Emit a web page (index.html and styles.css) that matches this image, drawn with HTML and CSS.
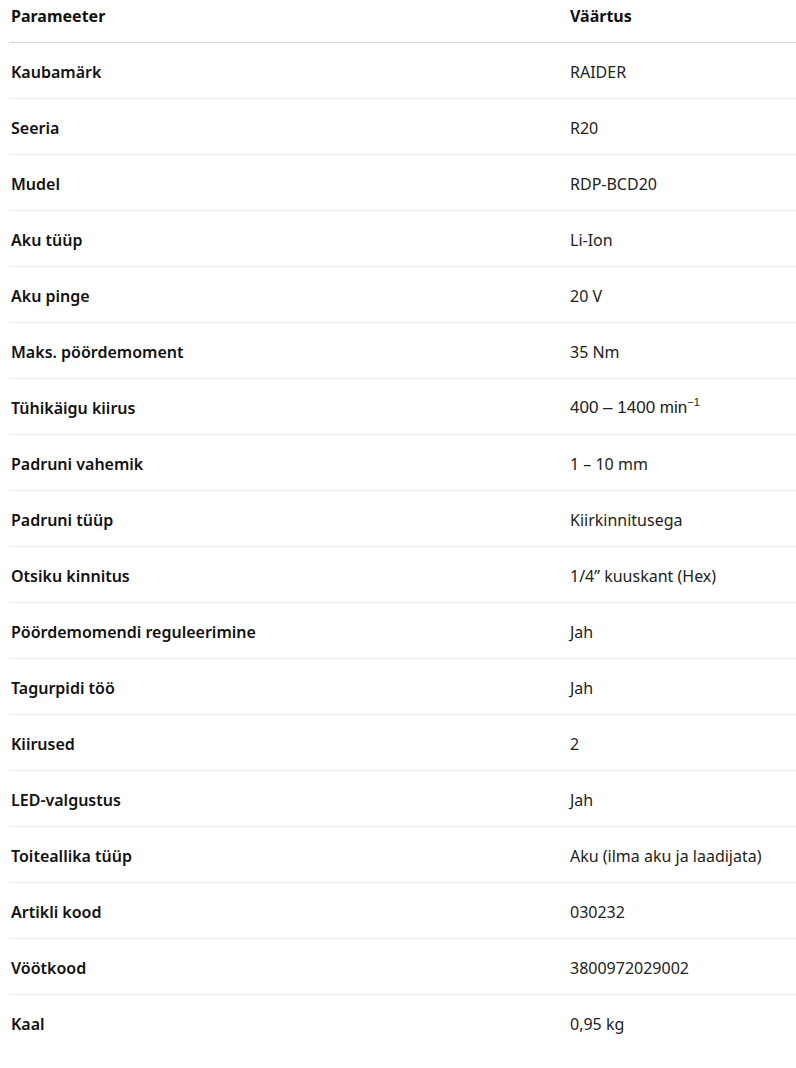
FILE: index.html
```html
<!DOCTYPE html>
<html lang="et">
<head>
<meta charset="utf-8">
<link rel="stylesheet" href="styles.css">
</head>
<body>
<table class="spec">
  <thead>
    <tr><th>Parameeter</th><th>Väärtus</th></tr>
  </thead>
  <tbody>
    <tr><td>Kaubamärk</td><td>RAIDER</td></tr>
    <tr><td>Seeria</td><td>R20</td></tr>
    <tr><td>Mudel</td><td>RDP-BCD20</td></tr>
    <tr><td>Aku tüüp</td><td>Li-Ion</td></tr>
    <tr><td>Aku pinge</td><td>20 V</td></tr>
    <tr><td>Maks. pöördemoment</td><td>35 Nm</td></tr>
    <tr><td>Tühikäigu kiirus</td><td class="arial">400 – 1400 min<sup>−1</sup></td></tr>
    <tr><td>Padruni vahemik</td><td>1 – 10 mm</td></tr>
    <tr><td>Padruni tüüp</td><td>Kiirkinnitusega</td></tr>
    <tr><td>Otsiku kinnitus</td><td>1/4” kuuskant (Hex)</td></tr>
    <tr><td>Pöördemomendi reguleerimine</td><td>Jah</td></tr>
    <tr><td>Tagurpidi töö</td><td>Jah</td></tr>
    <tr><td>Kiirused</td><td>2</td></tr>
    <tr><td>LED-valgustus</td><td>Jah</td></tr>
    <tr><td>Toiteallika tüüp</td><td>Aku (ilma aku ja laadijata)</td></tr>
    <tr><td>Artikli kood</td><td>030232</td></tr>
    <tr><td>Vöötkood</td><td>3800972029002</td></tr>
    <tr><td>Kaal</td><td>0,95 kg</td></tr>
  </tbody>
</table>
</body>
</html>
```
FILE: styles.css
```css
html, body {
  margin: 0;
  padding: 0;
  background: #ffffff;
}
body {
  font-family: "Noto Sans", "Open Sans", sans-serif;
  font-size: 16px;
  color: #1a1a1a;
}
.spec {
  margin-left: 10px;
  width: 786px;
  border-collapse: collapse;
}
.spec th,
.spec td {
  text-align: left;
  padding: 0 0 0 1px;
  vertical-align: middle;
}
.spec th:first-child,
.spec td:first-child {
  width: 559px;
}
.spec thead th {
  height: 42px;
  padding-bottom: 10px;
  box-sizing: border-box;
  font-weight: 700;
  color: #111;
  border-bottom: 1px solid #d6d6d6;
}
.spec tbody td {
  height: 56px;
  box-sizing: border-box;
  border-bottom: 1px solid #ececec;
  color: #222;
  padding-top: 4px;
}
.spec tbody td:first-child {
  font-weight: 600;
  color: #111;
}
.spec tbody tr:last-child td {
  border-bottom: none;
}
.spec .arial {
  font-family: "Liberation Sans", Arial, sans-serif;
  font-size: 17px;
}
.spec sup {
  font-size: 11px;
  line-height: 0;
}
```
